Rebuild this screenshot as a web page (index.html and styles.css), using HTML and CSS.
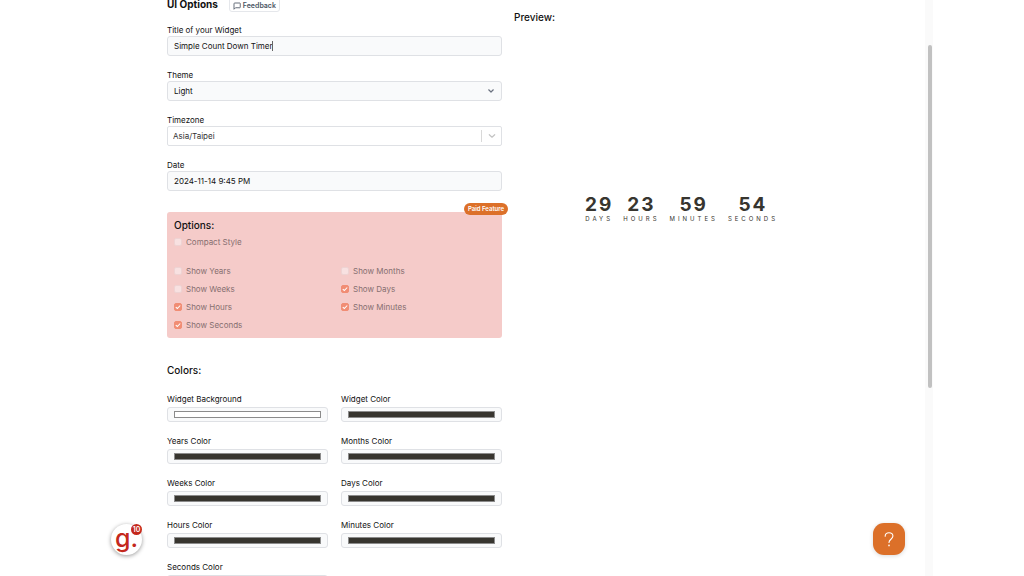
FILE: index.html
```html
<!DOCTYPE html>
<html lang="en">
<head>
<meta charset="utf-8">
<meta name="viewport" content="width=device-width, initial-scale=1">
<title>Simple Count Down Timer</title>
<link rel="stylesheet" href="styles.css">
</head>
<body>
<div class="frame">
  <main class="content">
    <form class="settings">
      <header class="settings-header">
        <h1 class="heading">UI Options</h1>
        <button type="button" class="feedback">
          <svg class="feedback-icon" viewBox="0 0 16 16" fill="none" stroke="currentColor" stroke-width="1.7" stroke-linejoin="round"><path d="M3.5 2h10a1 1 0 0 1 1 1v7.500a1 1 0 0 1-1 1H5L2 14.500V3.500A1.500 1.500 0 0 1 3.500 2z"/></svg>
          Feedback
        </button>
      </header>

      <div class="fields">
        <div class="field">
          <label class="label" for="title">Title of your Widget</label>
          <div class="control">
            <input class="input" id="title" type="text" value="Simple Count Down Timer">
            <span class="caret"></span>
          </div>
        </div>
        <div class="field">
          <label class="label" for="theme">Theme</label>
          <div class="control">
            <select class="input" id="theme"><option>Light</option><option>Dark</option></select>
            <svg class="chevron" viewBox="0 0 8 8" fill="none" stroke="currentColor" stroke-width="1.200" stroke-linecap="round" stroke-linejoin="round"><path d="M1.700 2.800 4 5l2.300-2.200"/></svg>
          </div>
        </div>
        <div class="field">
          <label class="label" for="timezone">Timezone</label>
          <div class="control">
            <select class="input input-plain" id="timezone"><option>Asia/Taipei</option></select>
            <span class="divider"></span>
            <svg class="chevron chevron-light" viewBox="0 0 8 8" fill="none" stroke="currentColor" stroke-width="1.200" stroke-linecap="round" stroke-linejoin="round"><path d="M1.300 2.700 4 5.200l2.700-2.500"/></svg>
          </div>
        </div>
        <div class="field">
          <label class="label" for="date">Date</label>
          <div class="control"><input class="input" id="date" type="text" value="2024-11-14 9:45 PM"></div>
        </div>
      </div>

      <section class="options">
        <span class="paid">Paid Feature</span>
        <h2 class="subheading">Options:</h2>
        <label class="check"><input type="checkbox" class="box" disabled>Compact Style</label>
        <div class="check-grid">
          <label class="check"><input type="checkbox" class="box" disabled>Show Years</label>
          <label class="check"><input type="checkbox" class="box" disabled>Show Months</label>
          <label class="check"><input type="checkbox" class="box" disabled>Show Weeks</label>
          <label class="check"><input type="checkbox" class="box" disabled checked>Show Days</label>
          <label class="check"><input type="checkbox" class="box" disabled checked>Show Hours</label>
          <label class="check"><input type="checkbox" class="box" disabled checked>Show Minutes</label>
          <label class="check"><input type="checkbox" class="box" disabled checked>Show Seconds</label>
        </div>
      </section>

      <section class="colors">
        <h2 class="subheading">Colors:</h2>
        <div class="color-grid">
          <div class="color-field"><label class="label" for="c-bg">Widget Background</label><input class="color" id="c-bg" type="color" value="#ffffff"></div>
          <div class="color-field"><label class="label" for="c-widget">Widget Color</label><input class="color" id="c-widget" type="color" value="#37352f"></div>
          <div class="color-field"><label class="label" for="c-years">Years Color</label><input class="color" id="c-years" type="color" value="#37352f"></div>
          <div class="color-field"><label class="label" for="c-months">Months Color</label><input class="color" id="c-months" type="color" value="#37352f"></div>
          <div class="color-field"><label class="label" for="c-weeks">Weeks Color</label><input class="color" id="c-weeks" type="color" value="#37352f"></div>
          <div class="color-field"><label class="label" for="c-days">Days Color</label><input class="color" id="c-days" type="color" value="#37352f"></div>
          <div class="color-field"><label class="label" for="c-hours">Hours Color</label><input class="color" id="c-hours" type="color" value="#37352f"></div>
          <div class="color-field"><label class="label" for="c-minutes">Minutes Color</label><input class="color" id="c-minutes" type="color" value="#37352f"></div>
          <div class="color-field"><label class="label" for="c-seconds">Seconds Color</label><input class="color" id="c-seconds" type="color" value="#37352f"></div>
        </div>
      </section>
    </form>

    <section class="preview">
      <h2 class="subheading">Preview:</h2>
      <div class="timer">
        <div class="unit"><span class="number">29</span><span class="unit-name">DAYS</span></div>
        <div class="unit"><span class="number">23</span><span class="unit-name">HOURS</span></div>
        <div class="unit"><span class="number">59</span><span class="unit-name">MINUTES</span></div>
        <div class="unit"><span class="number">54</span><span class="unit-name">SECONDS</span></div>
      </div>
    </section>
  </main>
  <div class="track"><div class="thumb"></div></div>

  <button type="button" class="grammar"><span class="grammar-mark">g.</span><span class="grammar-count">10</span></button>
  <button type="button" class="help" aria-label="Help">
    <svg class="help-icon" viewBox="0 0 16 20" fill="none" stroke="currentColor" stroke-width="1.300" stroke-linecap="round"><path d="M3.500 6.200C3.500 3.600 5.300 2 8 2s4.600 1.600 4.600 4c0 3.600-4.600 3.900-4.600 7.600"/><circle cx="8" cy="17" r=".4"/></svg>
  </button>
</div>
</body>
</html>
```
FILE: styles.css
```css
* { box-sizing: border-box; }

body {
  margin: 0;
  background: #fff;
  color: #111;
  font-family: Inter, "Liberation Sans", sans-serif;
  font-size: 8px;
  line-height: 12px;
}

button, input, select { font: inherit; color: inherit; }
h1, h2 { margin: 0; }

.frame {
  position: relative;
  display: flex;
  max-width: 842px;
  height: 100vh;
  margin: 0 auto;
  overflow: hidden;
}

.content {
  flex: 1;
  display: grid;
  grid-template-columns: 1fr 1fr;
  gap: 12px;
  padding: 0 76px;
}

.settings-header {
  display: flex;
  align-items: center;
  gap: 11px;
  height: 16px;
  margin-top: -4px;
}

.heading { font-size: 10px; line-height: 16px; font-weight: 700; }
.subheading { font-size: 10px; line-height: 14px; font-weight: 500; }

.feedback {
  display: flex;
  align-items: center;
  gap: 2px;
  height: 16px;
  padding: 3px 3px 0;
  border: 1px solid #e5e7eb;
  border-radius: 3px;
  background: #fff;
  color: #4b5563;
  font-size: 7px;
  font-weight: 600;
}
.feedback-icon { width: 8px; height: 8px; }

.fields { display: grid; gap: 13px; margin-top: 12px; }
.label { display: block; }
.control { position: relative; }

.input {
  display: block;
  width: 100%;
  height: 20px;
  padding: 0 6px;
  border: 1px solid #dfe1e5;
  border-radius: 3px;
  outline: none;
  background: #f9fafb;
  appearance: none;
}
.input-plain { padding: 0 5px; border-radius: 2px; background: #fff; color: #333; }

.caret { position: absolute; left: 105px; top: 5px; width: 1px; height: 10px; background: #666; }
.chevron { position: absolute; right: 7px; top: 6px; width: 8px; height: 8px; color: #6b7280; }
.chevron-light { right: 6px; color: #c4c4c4; }
.divider { position: absolute; right: 20px; top: 4px; width: 1px; height: 12px; background: #d9d9d9; }

.options {
  position: relative;
  margin-top: 21px;
  padding: 6px 6px 4px 7px;
  border-radius: 3px;
  background: #f5cbc9;
}
.options .subheading { margin-bottom: 1px; }

.paid {
  position: absolute;
  top: -9px;
  right: -6px;
  padding: 0 4px;
  border-radius: 6px;
  background: #dc7029;
  color: #fff;
  font-size: 6px;
  font-weight: 600;
}

.check-grid {
  display: grid;
  grid-template-columns: 1fr 1fr;
  column-gap: 12px;
  margin-top: 11px;
}
.check {
  display: flex;
  align-items: center;
  gap: 4px;
  height: 18px;
  color: #866f70;
}

.box {
  width: 8px;
  height: 8px;
  margin: 0;
  border: 1px solid #eed3d3;
  border-radius: 2px;
  background: #f8e1e1;
  appearance: none;
}
.box:checked {
  border-color: #f18d74;
  background: #f18d74 url("data:image/svg+xml,%3Csvg xmlns='http://www.w3.org/2000/svg' viewBox='0 0 8 8' fill='none' stroke='%23fff' stroke-width='1.400'%3E%3Cpath d='M1 4.200 3.100 6 7 2'/%3E%3C/svg%3E") center / 6px no-repeat;
}

.colors { margin-top: 25px; }
.color-grid {
  display: grid;
  grid-template-columns: 1fr 1fr;
  gap: 13px;
  margin-top: 16px;
}
.color-field { display: grid; gap: 2px; }
.color {
  width: 100%;
  height: 15px;
  padding: 3px 6px;
  border: 1px solid #dfe1e5;
  border-radius: 3px;
  background: #f9fafb;
  appearance: none;
}
.color::-webkit-color-swatch-wrapper { padding: 0; }
.color::-webkit-color-swatch { border: 1px solid #8b8b8b; border-radius: 0; }

.preview .subheading { margin-top: 10px; }
.timer {
  display: flex;
  justify-content: center;
  gap: 10px;
  margin-top: 171px;
  color: #37352f;
}
.unit { display: flex; flex-direction: column; align-items: center; }
.number { font-size: 19px; line-height: 20px; font-weight: 700; letter-spacing: 2px; }
.unit-name { font-size: 6px; line-height: 8px; letter-spacing: 3px; }

.track { width: 8px; padding: 45px 1px 0 3px; background: #fafafa; }
.thumb { height: 343px; border-radius: 2px; background: #c1c1c1; }

.grammar {
  position: absolute;
  left: 20px;
  bottom: 21px;
  width: 31px;
  height: 31px;
  padding: 0 0 4px;
  border: 0;
  border-radius: 50%;
  background: #fff;
  box-shadow: 0 1px 4px rgba(0, 0, 0, 0.4);
  color: #c4281c;
}
.grammar-mark { display: block; font-size: 25px; line-height: 24px; font-weight: 500; }
.grammar-count {
  position: absolute;
  top: 0;
  right: 0;
  width: 11px;
  border-radius: 6px;
  background: #c4281c;
  color: #fff;
  font-size: 7px;
  line-height: 11px;
  font-weight: 600;
}

.help {
  position: absolute;
  right: 28px;
  bottom: 21px;
  display: grid;
  place-items: center;
  width: 32px;
  height: 32px;
  padding: 0;
  border: 0;
  border-radius: 11px;
  background: #dc7029;
  box-shadow: 0 1px 4px rgba(0, 0, 0, 0.15);
  color: #fff;
}
.help-icon { width: 14px; height: 17px; }
```
